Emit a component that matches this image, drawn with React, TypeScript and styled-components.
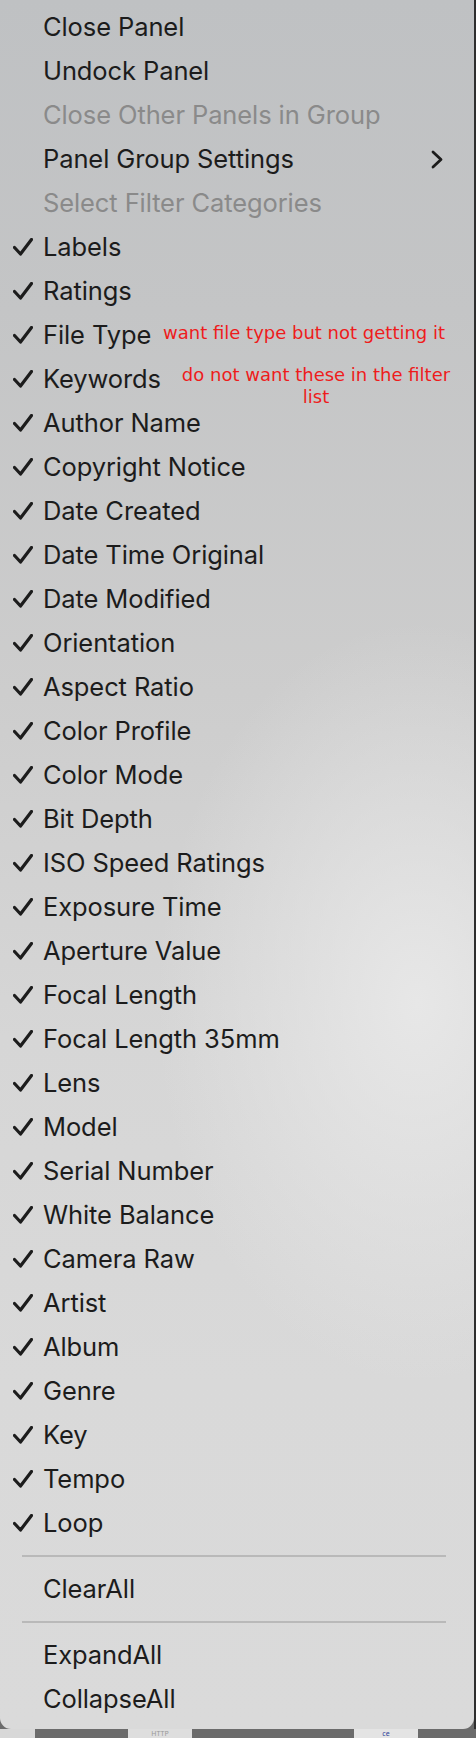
import React from "react";
import styled, { createGlobalStyle } from "styled-components";

const Global = createGlobalStyle`
  html, body { margin: 0; padding: 0; }
  body {
    width: 476px;
    height: 1738px;
    overflow: hidden;
    background: #6b6b6b;
    font-family: Inter, "Noto Sans", "Liberation Sans", sans-serif;
  }
`;

const Page = styled.div`
  position: relative;
  width: 476px;
  height: 1738px;
  display: grid;
  grid-template-columns: 474px 2px;
  grid-template-rows: 1729px 9px;
  background: #6b6b6b;
`;

const EdgeStrip = styled.div`
  grid-column: 2;
  grid-row: 1;
  background: #2e2e2e;
`;

const Under = styled.div`
  grid-column: 1 / span 2;
  grid-row: 2;
  position: relative;
  overflow: hidden;
  display: flex;
  align-items: flex-start;
  background: #6b6b6b;
`;

const UnderTile = styled.div<{ $w: number; $ml: number; $bg: string; $fg?: string }>`
  width: ${(p) => p.$w}px;
  margin-left: ${(p) => p.$ml}px;
  height: 9px;
  background: ${(p) => p.$bg};
  color: ${(p) => p.$fg || "#333"};
  overflow: hidden;
  font-size: 7px;
  line-height: 9px;
  text-align: center;
  font-family: "Noto Sans", sans-serif;
`;

const Menu = styled.div`
  grid-column: 1;
  grid-row: 1;
  position: relative;
  z-index: 1;
  box-sizing: border-box;
  padding: 5px 0 8px;
  border-radius: 0 0 11px 11px;
  background:
    radial-gradient(ellipse 55% 22% at 88% 58%, rgba(232, 232, 232, 0.95), rgba(232, 232, 232, 0) 100%),
    linear-gradient(180deg, #bfc1c3 0%, #c4c5c6 18%, #cdcdcd 40%, #d6d6d6 60%, #d9d9d9 80%, #dadada 100%);
  display: flex;
  flex-direction: column;
`;

const Item = styled.div<{ $disabled?: boolean }>`
  height: 44px;
  display: grid;
  grid-template-columns: 43px 1fr auto;
  align-items: center;
  padding-right: 31px;
  font-size: 25.5px;
  letter-spacing: -0.1px;
  color: ${(p) => (p.$disabled ? "#8a8a8a" : "#1c1c1c")};
  white-space: nowrap;
`;

const CheckCell = styled.span`
  display: flex;
  align-items: center;
  padding-left: 13px;
  height: 100%;
`;

const Label = styled.span`
  line-height: 44px;
`;

const Separator = styled.div`
  height: 22px;
  display: flex;
  align-items: center;
  padding: 0 28px 0 22px;
  &::before {
    content: "";
    flex: 1;
    height: 1.5px;
    background: #b9b9b9;
  }
`;

const Note = styled.div<{ $top: number; $left: number; $w?: number }>`
  position: absolute;
  top: ${(p) => p.$top}px;
  left: ${(p) => p.$left}px;
  ${(p) => (p.$w ? `width: ${p.$w}px;` : "")}
  font-family: "DejaVu Sans", Verdana, sans-serif;
  font-size: 18px;
  line-height: 22px;
  color: #ee1c1c;
  text-align: center;
  white-space: ${(p) => (p.$w ? "normal" : "nowrap")};
`;

const Check = () => (
  <svg width="20" height="18" viewBox="0 0 20 18" fill="none">
    <path d="M1.5 9.5 L7.5 16 L18.5 1.5" stroke="#1c1c1c" strokeWidth="3.2" strokeLinecap="round" strokeLinejoin="round" />
  </svg>
);

const Chevron = () => (
  <svg width="12" height="19" viewBox="0 0 12 19" fill="none">
    <path d="M2 2 L10 9.5 L2 17" stroke="#1c1c1c" strokeWidth="2.8" strokeLinecap="round" strokeLinejoin="round" />
  </svg>
);

const checked = [
  "Labels",
  "Ratings",
  "File Type",
  "Keywords",
  "Author Name",
  "Copyright Notice",
  "Date Created",
  "Date Time Original",
  "Date Modified",
  "Orientation",
  "Aspect Ratio",
  "Color Profile",
  "Color Mode",
  "Bit Depth",
  "ISO Speed Ratings",
  "Exposure Time",
  "Aperture Value",
  "Focal Length",
  "Focal Length 35mm",
  "Lens",
  "Model",
  "Serial Number",
  "White Balance",
  "Camera Raw",
  "Artist",
  "Album",
  "Genre",
  "Key",
  "Tempo",
  "Loop",
];

export default function App() {
  return (
    <>
      <Global />
      <Page>
        <Menu>
          <Item><span /><Label>Close Panel</Label></Item>
          <Item><span /><Label>Undock Panel</Label></Item>
          <Item $disabled><span /><Label>Close Other Panels in Group</Label></Item>
          <Item>
            <span />
            <Label>Panel Group Settings</Label>
            <Chevron />
          </Item>
          <Item $disabled><span /><Label>Select Filter Categories</Label></Item>
          {checked.map((name) => (
            <Item key={name}>
              <CheckCell><Check /></CheckCell>
              <Label>{name}</Label>
            </Item>
          ))}
          <Separator />
          <Item><span /><Label>ClearAll</Label></Item>
          <Separator />
          <Item><span /><Label>ExpandAll</Label></Item>
          <Item><span /><Label>CollapseAll</Label></Item>
          <Note $top={322} $left={163}>want file type but not getting it</Note>
          <Note $top={364} $left={174} $w={284}>do not want these in the filter list</Note>
        </Menu>
        <EdgeStrip />
        <Under>
          <UnderTile $w={35} $ml={0} $bg="#d8d8d8" />
          <UnderTile $w={64} $ml={93} $bg="#dedede" $fg="#999">HTTP</UnderTile>
          <UnderTile $w={64} $ml={162} $bg="#e4e4e4" $fg="#2b3f9a">ce</UnderTile>
        </Under>
      </Page>
    </>
  );
}
